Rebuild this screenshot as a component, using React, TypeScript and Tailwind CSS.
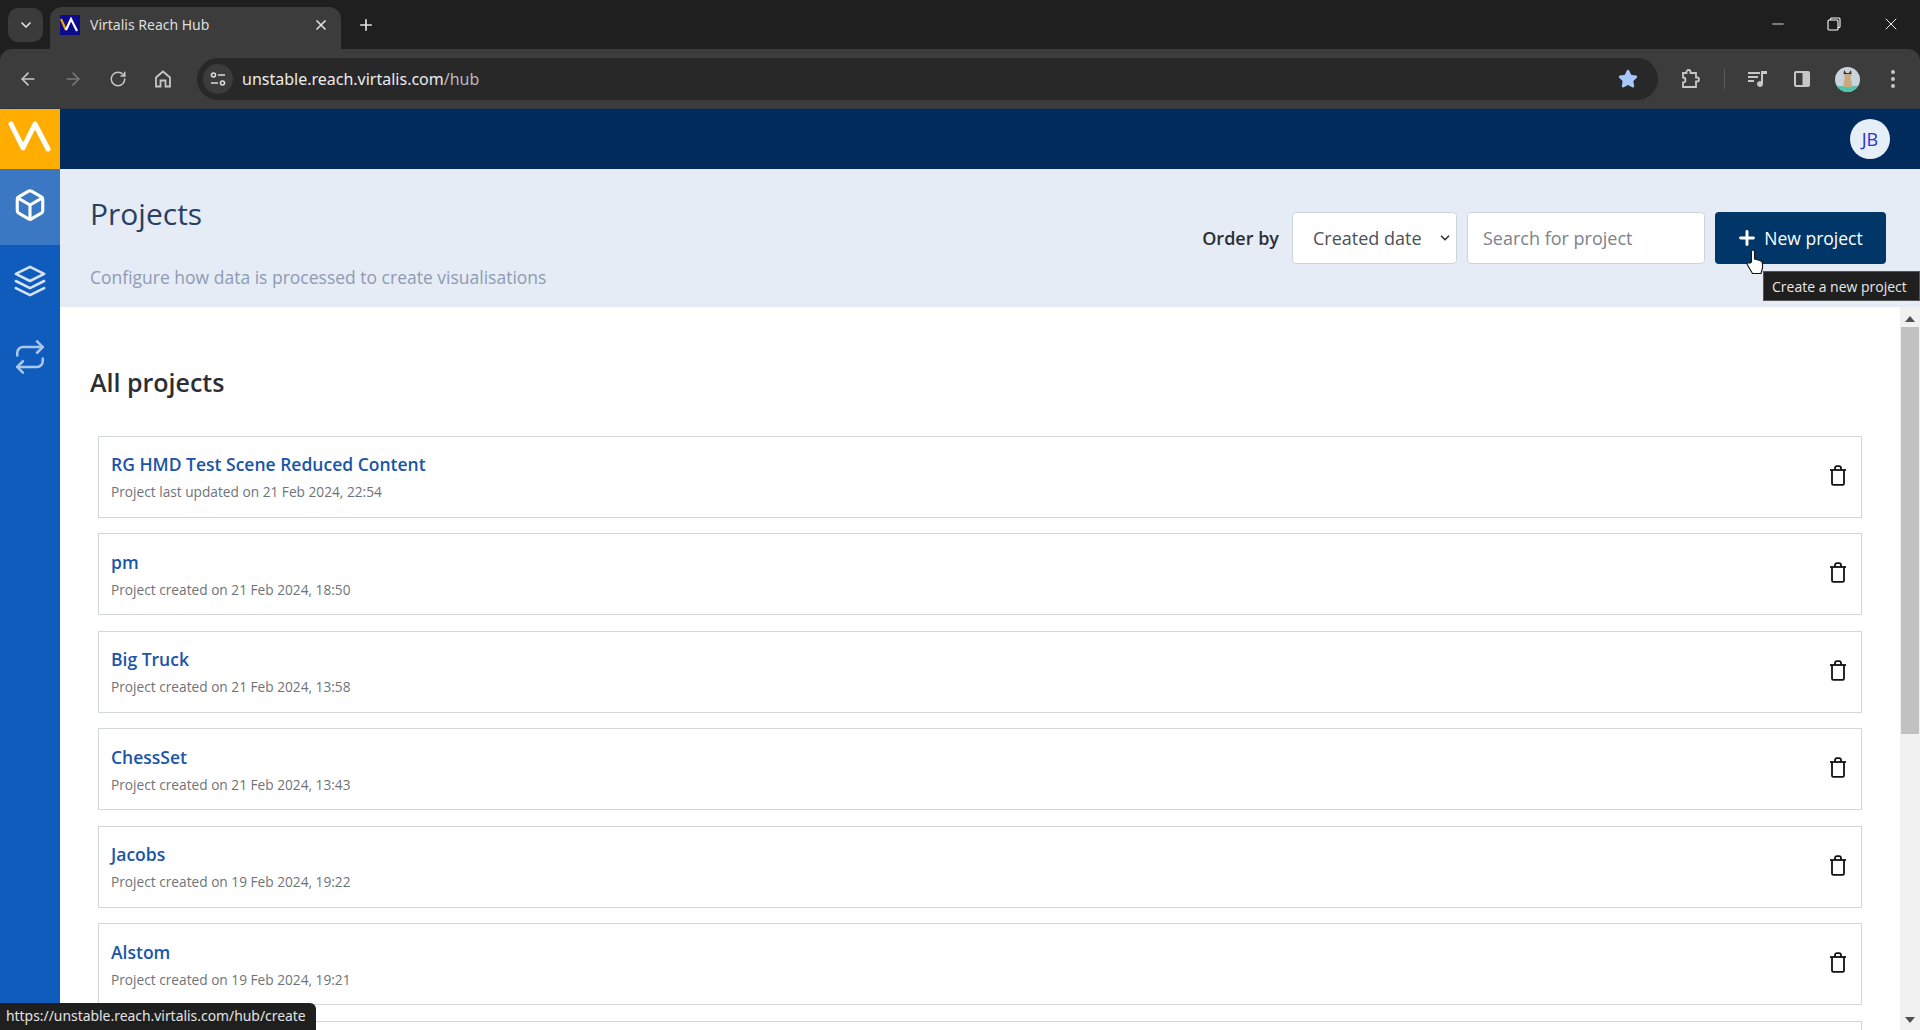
import { ArrowLeft, ArrowRight, RotateCw, X, Plus, ChevronDown, Star, Minus } from "lucide-react";
import { FiBox, FiLayers, FiRepeat } from "react-icons/fi";

const projects = [
  ["RG HMD Test Scene Reduced Content", "Project last updated on 21 Feb 2024, 22:54"],
  ["pm", "Project created on 21 Feb 2024, 18:50"],
  ["Big Truck", "Project created on 21 Feb 2024, 13:58"],
  ["ChessSet", "Project created on 21 Feb 2024, 13:43"],
  ["Jacobs", "Project created on 19 Feb 2024, 19:22"],
  ["Alstom", "Project created on 19 Feb 2024, 19:21"],
];

function Trash() {
  return (
    <svg width="18" height="21" viewBox="0 0 18 21" fill="none" stroke="#111" strokeWidth="1.8">
      <path d="M1 5h16" />
      <path d="M6 5V3.2C6 2 6.8 1.2 8 1.2h2c1.200 0 2 .8 2 2V5" />
      <path d="M3 5v13.500c0 .8.500 1.300 1.300 1.300h9.400c.8 0 1.300-.5 1.300-1.300V5" />
    </svg>
  );
}

function Card({ title, sub }: { title: string; sub: string }) {
  return (
    <div className="flex h-[82px] shrink-0 items-center justify-between border border-[#d3d6de] bg-white pl-[12px] pr-[14px]">
      <div className="flex flex-col">
        <a className="text-[17.500px] leading-[26px] font-semibold text-[#1a55a8]">{title}</a>
        <span className="mt-[5px] text-[13.700px] leading-[20px] text-[#6f7377]">{sub}</span>
      </div>
      <div className="mb-[3px]">
        <Trash />
      </div>
    </div>
  );
}

export default function App() {
  return (
    <div className="relative flex h-[1030px] w-[1920px] flex-col overflow-hidden bg-white font-['Open_Sans',sans-serif]">
      {/* Tab strip */}
      <div className="flex h-[50px] shrink-0 items-end bg-[#1f1f1f] pl-[8px]">
        <div className="mb-[8px] flex h-[34px] w-[35px] items-center justify-center rounded-[10px] bg-[#3b3b3b]">
          <ChevronDown size={16} strokeWidth={2.5} color="#e3e3e3" />
        </div>
        <div className="ml-[7px] flex h-[43px] w-[291px] items-center rounded-t-[12px] bg-[#3c3c3c] pb-[8px] pl-[10px] pr-[12px]">
          <svg width="20" height="20" viewBox="0 0 20 20">
            <rect width="20" height="20" fill="#0b0a8c" />
            <path d="M1 4l5 11" stroke="#f5a300" strokeWidth="2.200" fill="none" />
            <path d="M6 15l5-11 6 12" stroke="#fff" strokeWidth="2.200" fill="none" />
          </svg>
          <span className="ml-[10px] flex-1 font-['Noto_Sans',sans-serif] text-[14px] text-[#dedede]">Virtalis Reach Hub</span>
          <X size={16} strokeWidth={2.500} color="#e3e3e3" />
        </div>
        <div className="mb-[16px] ml-[16px]">
          <Plus size={18} strokeWidth={2.200} color="#e3e3e3" />
        </div>
        <div className="flex-1" />
        <div className="mb-[16px] flex items-center">
          <div className="flex w-[56px] justify-center"><Minus size={18} strokeWidth={1.100} color="#fff" /></div>
          <div className="flex w-[56px] justify-center">
            <svg width="14" height="14" viewBox="0 0 14 14" fill="none" stroke="#fff" strokeWidth="1.100">
              <rect x="1" y="3" width="10" height="10" rx="1" />
              <path d="M3.500 3V2c0-.6.400-1 1-1H12c.6 0 1 .4 1 1v7.500c0 .6-.4 1-1 1h-1" />
            </svg>
          </div>
          <div className="flex w-[58px] justify-center"><X size={20} strokeWidth={1.100} color="#fff" /></div>
        </div>
      </div>

      {/* Toolbar */}
      <div className="shrink-0 bg-[#1f1f1f]">
        <div className="-mt-px flex h-[60px] items-center rounded-t-[12px] border-b border-[#2f3742] bg-[#3c3c3c] pb-[1px] pl-[18px] pr-[11px] pt-[2px]">
          <ArrowLeft size={20} color="#c7c7c7" strokeWidth={2} />
          <ArrowRight size={20} color="#777" strokeWidth={2} className="ml-[25px]" />
          <RotateCw size={18} color="#c7c7c7" strokeWidth={2} className="ml-[26px]" />
          <svg width="18" height="18" viewBox="0 0 18 18" fill="none" stroke="#c7c7c7" strokeWidth="1.800" className="ml-[27px]">
            <path d="M2 7.500L9 1.500l7 6V16.500h-4.500V10.500h-5v6H2z" />
          </svg>
          <div className="ml-[25px] flex h-[42px] w-[1461px] items-center rounded-full bg-[#282828] pl-[6px] pr-[20px]">
            <div className="flex h-[30px] w-[30px] items-center justify-center rounded-full bg-[#3c3c3c]">
              <svg width="16" height="14" viewBox="0 0 16 14" fill="none" stroke="#dcdcdc" strokeWidth="1.600">
                <circle cx="3.500" cy="3" r="2" />
                <path d="M8 3h7M1 11h7" />
                <circle cx="12.500" cy="11" r="2" />
              </svg>
            </div>
            <span className="ml-[9px] flex-1 font-['Noto_Sans',sans-serif] text-[16px] text-[#ececec]">
              unstable.reach.virtalis.com<span className="text-[#b9b9b9]">/hub</span>
            </span>
            <Star size={20} fill="#a8c7fa" color="#a8c7fa" />
          </div>
          <svg width="20" height="20" viewBox="0 0 20 20" fill="none" stroke="#c7c7c7" strokeWidth="1.800" className="ml-[22px]">
            <path d="M2 4h4.500V3a2 2 0 0 1 4 0v1H16v4.500h1a2 2 0 0 1 0 4h-1V18H3v-4.500a2 2 0 0 0 0-5V4z" />
          </svg>
          <div className="ml-[24px] h-[20px] w-px bg-[#5c5c5c]" />
          <svg width="20" height="18" viewBox="0 0 20 18" fill="#c7c7c7" className="ml-[23px]">
            <path d="M0 2h12v2H0zM0 6h10v2H0zM0 10h6v2H0z" />
            <path d="M13 1h6v3h-4v10a3 3 0 1 1-2-2.800z" />
          </svg>
          <svg width="18" height="18" viewBox="0 0 18 18" className="ml-[25px]">
            <rect x="1" y="1" width="16" height="16" rx="2" fill="#c7c7c7" />
            <rect x="3" y="3" width="6.500" height="12" fill="#3c3c3c" />
          </svg>
          <svg width="25" height="25" viewBox="0 0 25 25" className="ml-[24px]">
            <defs><clipPath id="av"><circle cx="12.500" cy="12.500" r="12.500" /></clipPath></defs>
            <g clipPath="url(#av)">
              <rect width="25" height="25" fill="#c9d3dd" />
              <rect y="19" width="25" height="6" fill="#4fc4ae" />
              <path d="M9 3l2 3h3l2-3 .5 6-1 1 2 10H8l2-10-1-1z" fill="#c9a97e" />
              <path d="M9 3l2 3h3l2-3 .5 4h-8z" fill="#3a2f2a" />
            </g>
          </svg>
          <svg width="6" height="20" viewBox="0 0 6 20" fill="#c7c7c7" className="ml-[30px]">
            <circle cx="3" cy="3" r="2" />
            <circle cx="3" cy="10" r="2" />
            <circle cx="3" cy="17" r="2" />
          </svg>
        </div>
      </div>

      {/* App header */}
      <div className="flex h-[60px] shrink-0 items-center justify-between bg-[#002b5c] pr-[30px]">
        <div className="flex h-[60px] w-[60px] items-center justify-center bg-[#ffad00]">
          <svg width="60" height="60" viewBox="0 0 60 60" fill="none" stroke="#fff" strokeWidth="5" strokeLinecap="round" strokeLinejoin="round">
            <path d="M11 15l12 24 12-24 13 25" />
          </svg>
        </div>
        <div className="flex h-[40px] w-[40px] items-center justify-center rounded-full bg-[#e6eef7] text-[18px] text-[#2a33d4]">JB</div>
      </div>

      <div className="flex min-h-0 flex-1">
        {/* Sidebar */}
        <div className="flex w-[60px] shrink-0 flex-col bg-[#0f5cbc] text-white">
          <div className="flex h-[76px] items-center justify-center bg-[#3b78c3] pb-[5px]">
            <FiBox size={34} strokeWidth={2.200} />
          </div>
          <div className="flex h-[76px] items-center justify-center pb-[5px] text-[#d5e3f5]">
            <FiLayers size={34} strokeWidth={1.800} />
          </div>
          <div className="flex h-[76px] items-center justify-center pb-[5px] text-[#a9c7ec]">
            <FiRepeat size={34} strokeWidth={1.800} />
          </div>
        </div>

        <div className="flex min-w-0 flex-1 flex-col">
          {/* Page header */}
          <div className="flex h-[138px] shrink-0 items-start justify-between bg-[#e5ecf6] pl-[30px] pr-[34px]">
            <div className="flex flex-col">
              <h1 className="mt-[25px] text-[30px] leading-[40px] font-normal text-[#2a3f63]">Projects</h1>
              <p className="mt-[31px] text-[17.500px] leading-[24px] text-[#8e9bb3]">Configure how data is processed to create visualisations</p>
            </div>
            <div className="mt-[43px] flex items-center">
              <span className="mr-[13px] text-[18px] font-semibold text-[#2b2f33]">Order by</span>
              <div className="flex h-[52px] w-[165px] items-center justify-between rounded-[4px] border border-[#ced4da] bg-white pl-[20px] pr-[4px]">
                <span className="text-[18px] text-[#495057]">Created date</span>
                <ChevronDown size={14} strokeWidth={3} color="#343a40" />
              </div>
              <div className="ml-[10px] flex h-[52px] w-[238px] items-center rounded-[4px] border border-[#ced4da] bg-white pl-[15px]">
                <span className="text-[18px] text-[#7c838a]">Search for project</span>
              </div>
              <div className="ml-[10px] flex h-[52px] w-[171px] items-center justify-center rounded-[4px] bg-[#003768] pr-[2px] text-white">
                <Plus size={22} strokeWidth={3.200} />
                <span className="ml-[6px] text-[17.500px] font-medium">New project</span>
              </div>
            </div>
          </div>

          <div className="flex min-h-0 flex-1">
            <div className="min-w-0 flex-1 pl-[30px] pr-[38px]">
              <h2 className="mt-[57px] text-[25px] leading-[36px] font-semibold text-[#2b2f33]">All projects</h2>
              <div className="mt-[35.500px] flex flex-col gap-[15.500px] pl-[8px]">
                {projects.map(([t, s]) => (
                  <Card key={t} title={t} sub={s} />
                ))}
                <div className="h-[82px] shrink-0 border border-[#d3d6de] bg-white" />
              </div>
            </div>
            {/* Scrollbar */}
            <div className="flex w-[20px] shrink-0 flex-col items-center bg-[#f1f1f1]">
              <div className="mt-[9px] h-0 w-0 border-x-[5px] border-b-[6px] border-x-transparent border-b-[#505050]" />
              <div className="mt-[5px] h-[407px] w-[18px] bg-[#c1c1c1]" />
              <div className="flex-1" />
              <div className="mb-[7px] h-0 w-0 border-x-[5px] border-t-[6px] border-x-transparent border-t-[#505050]" />
            </div>
          </div>
        </div>
      </div>

      {/* Tooltip */}
      <div className="absolute left-[1763px] top-[271px] flex h-[30px] w-[157px] items-center border border-[#555] bg-[#1f1f1f] pl-[8px] text-[14px] whitespace-nowrap text-[#e8e8e8]">
        Create a new project
      </div>

      {/* Cursor */}
      <svg className="absolute left-[1746px] top-[249px]" width="18" height="26" viewBox="0 0 18 26" fill="#fff" stroke="#111" strokeWidth="1.100" strokeLinejoin="round">
        <path d="M5.500 13V2.500a1.500 1.500 0 0 1 3 0V10l5.500 1.500c1.500.4 2.500 1.500 2.500 3V19l-1.500 5.500H6.500L1.500 16c-1-1.500.8-3 2.200-1.800z" />
      </svg>

      {/* Status bubble */}
      <div className="absolute bottom-0 left-0 flex h-[27px] items-center rounded-tr-[6px] bg-[#1f1f1f] pl-[6px] pr-[10px] font-['Noto_Sans',sans-serif] text-[13.900px] text-[#e3e3e3]">
        https://unstable.reach.virtalis.com/hub/create
      </div>
    </div>
  );
}
